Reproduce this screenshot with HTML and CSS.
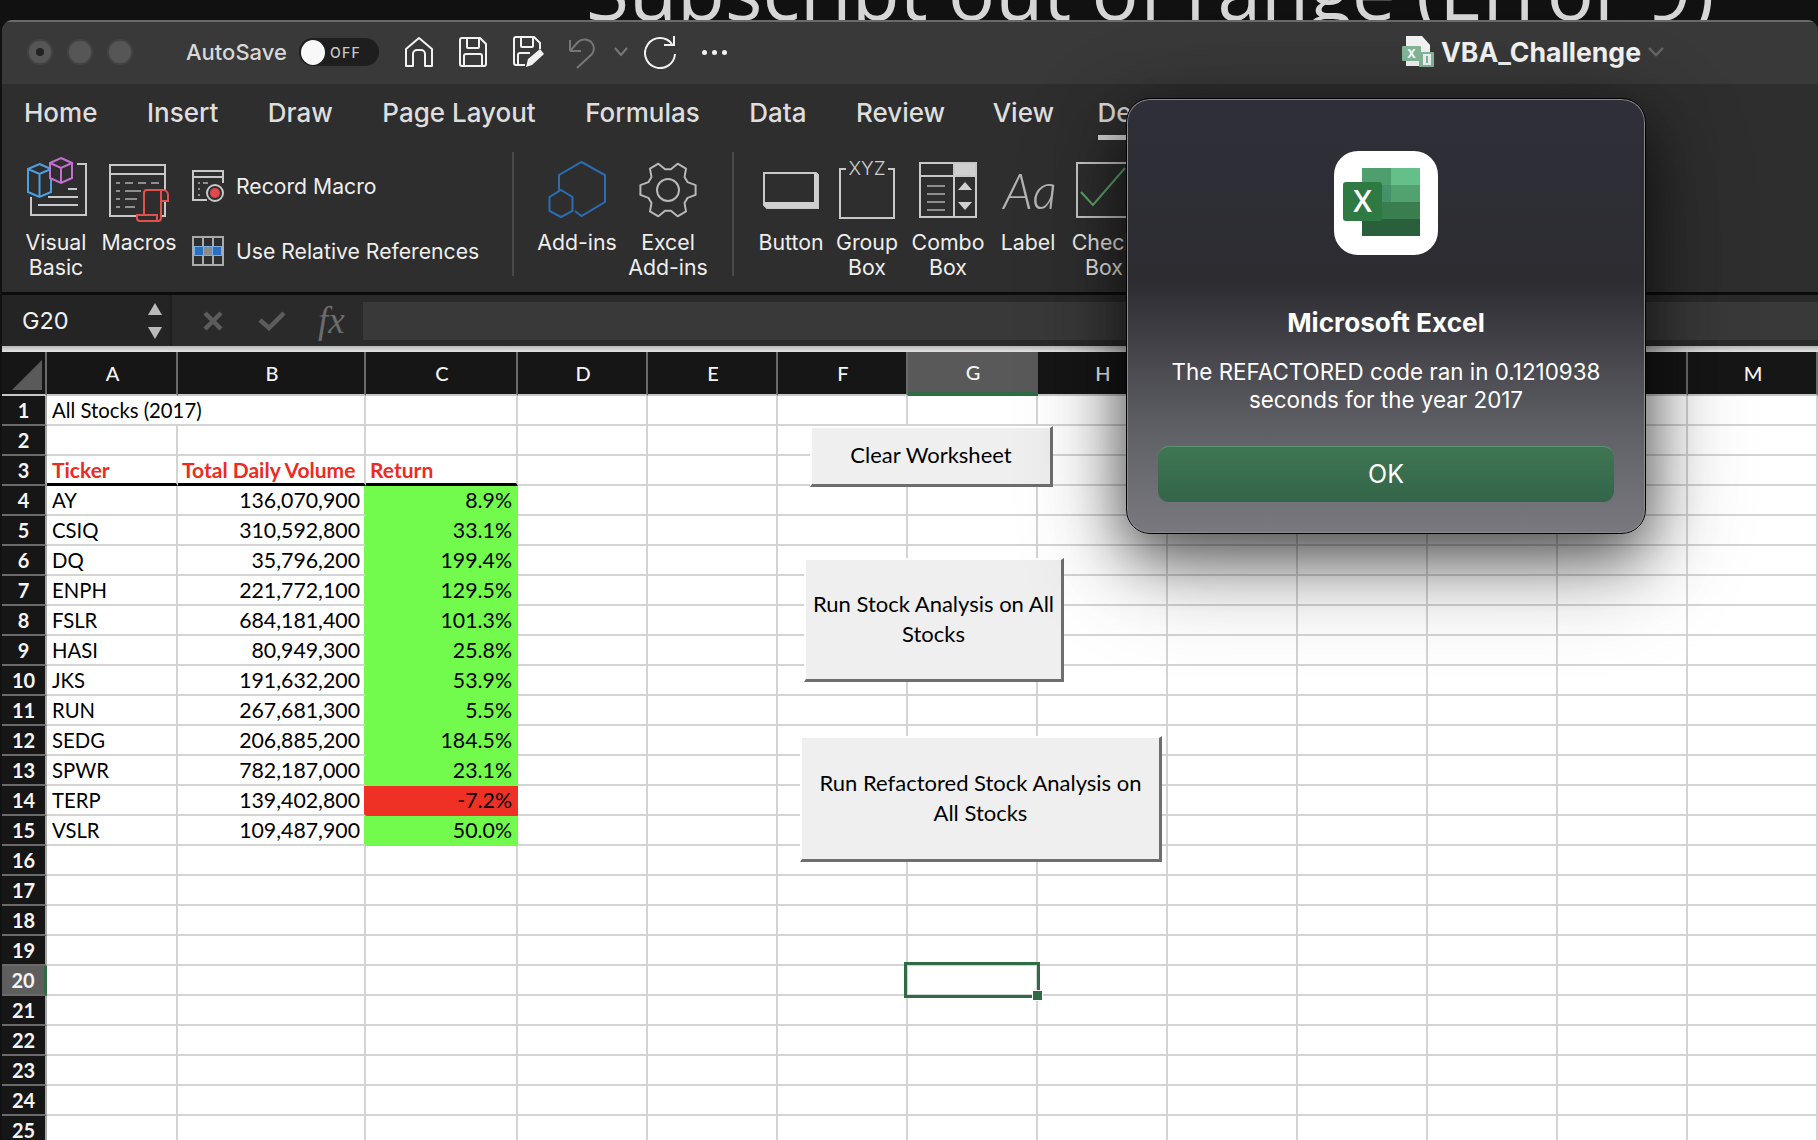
FILE: index.html
```html
<!DOCTYPE html>
<html lang="en">
<head>
  <meta charset="UTF-8">
  <title>VBA_Challenge</title>
  <link rel="stylesheet" href="styles.css">
</head>
<body>

  <div class="backdrop"><span class="backdrop-text">Subscript out of range (Error 9)</span></div>

  <div class="window">

    <!-- title bar -->
    <div class="titlebar">
      <div class="lights">
        <span class="light light-dot"></span>
        <span class="light"></span>
        <span class="light"></span>
      </div>
      <span class="autosave">AutoSave</span>
      <span class="toggle"><i class="knob"></i><b>OFF</b></span>
      <svg class="qa qa-home" width="30" height="32" viewBox="0 0 30 32"><path d="M2 30V13L15 2l13 11v17h-7V18a4 4 0 0 0-4-4h-4a4 4 0 0 0-4 4v12z" fill="none" stroke="#f2f2f2" stroke-width="2" stroke-linejoin="round"/></svg>
      <svg class="qa qa-save" width="30" height="32" viewBox="0 0 30 32"><path d="M4 2h18l6 6v20a2 2 0 0 1-2 2H4a2 2 0 0 1-2-2V4a2 2 0 0 1 2-2zM9 2v9a1 1 0 0 0 1 1h10a1 1 0 0 0 1-1V2M6 30V20a2 2 0 0 1 2-2h14a2 2 0 0 1 2 2v10" fill="none" stroke="#f2f2f2" stroke-width="2"/></svg>
      <svg class="qa qa-edit" width="32" height="34" viewBox="0 0 32 34"><path d="M13 30H4a2 2 0 0 1-2-2V4a2 2 0 0 1 2-2h18l6 6v6M9 2v9a1 1 0 0 0 1 1h10a1 1 0 0 0 1-1V2M6 30V20a2 2 0 0 1 2-2h10" fill="none" stroke="#f2f2f2" stroke-width="2"/><path d="M14 32l2-8 12-10 4 5-12 11z" fill="#f2f2f2"/></svg>
      <svg class="qa qa-undo" width="30" height="34" viewBox="0 0 30 34"><path d="M3 16V5M3 16h11M3 16l8-9c4-4 11-3 14 1 3 4 2 8 0 11L10 33" fill="none" stroke="#777" stroke-width="2"/></svg>
      <svg class="qa qa-caret" width="14" height="10" viewBox="0 0 14 10"><path d="M1 1l6 7 6-7" fill="none" stroke="#777" stroke-width="2"/></svg>
      <svg class="qa qa-redo" width="34" height="34" viewBox="0 0 34 34"><path d="M28 9a15 15 0 1 0 3 10M30 1v9H20" fill="none" stroke="#f2f2f2" stroke-width="2"/></svg>
      <span class="more"><i></i><i></i><i></i></span>

      <div class="doc-title">
        <svg width="32" height="32" viewBox="0 0 32 32">
          <path d="M4 0h16l8 9v21H4z" fill="#f4f4f4"/>
          <rect x="0" y="10" width="19" height="15" rx="1" fill="#86b89a"/>
          <text x="9.5" y="22" class="mini-x">X</text>
          <rect x="17" y="16" width="15" height="15" rx="1" fill="#86b89a"/>
          <rect x="21" y="18" width="8" height="11" fill="#f4f4f4"/>
          <rect x="24" y="20" width="2" height="7" fill="#86b89a"/>
        </svg>
        <span>VBA_Challenge</span>
        <svg width="16" height="10" viewBox="0 0 16 10"><path d="M1 1l7 7 7-7" fill="none" stroke="#666" stroke-width="2.4"/></svg>
      </div>
    </div>

    <!-- ribbon tabs -->
    <div class="tabs">
      <span class="tab">Home</span>
      <span class="tab">Insert</span>
      <span class="tab">Draw</span>
      <span class="tab">Page Layout</span>
      <span class="tab">Formulas</span>
      <span class="tab">Data</span>
      <span class="tab">Review</span>
      <span class="tab tab-view">View</span>
      <span class="tab tab-active">Developer</span>
    </div>

    <!-- ribbon tools -->
    <div class="ribbon">
      <div class="tool">
        <svg width="62" height="66" viewBox="0 0 62 66">
          <path d="M52 8h9v51H6V41" class="ln"/>
          <path d="M43 33h9M23 41h30M13 49h40" class="ln"/>
          <path d="M14.500 8L26 13v23l-11.500 5L3 36V13zM3 13l11.500 5L26 13M14.500 18v23" fill="#2e2e2e" stroke="#4d9fe0" stroke-width="2"/>
          <path d="M36 2l11 5v15l-11 5-11-5V7zM25 7l11 5 11-5M36 12v15" fill="#2e2e2e" stroke="#c56fd0" stroke-width="2"/>
        </svg>
        <span class="tool-label">Visual<br>Basic</span>
      </div>
      <div class="tool">
        <svg width="64" height="66" viewBox="0 0 64 66">
          <path d="M3 9h55v51H3zM3 18h55" class="ln"/>
          <path d="M9 27h4M18 27h8M31 27h8M44 27h8M9 35h4M18 35h16M9 43h4M18 43h12M9 51h4M18 51h10" class="ln thin"/>
          <path d="M37 60V37a3 3 0 0 1 3-3h16a5 5 0 0 1 5 5v6h-7M54 34v28a3 3 0 0 1-3 3H33a3 3 0 0 1-3-3v-3h20v6" fill="#2e2e2e" stroke="#e0524d" stroke-width="2"/>
        </svg>
        <span class="tool-label">Macros</span>
      </div>

      <div class="stack">
        <div class="stack-row">
          <svg width="32" height="32" viewBox="0 0 32 32">
            <path d="M15 30H1V1h30v12M1 7h30" class="ln"/>
            <path d="M6 13h2M11 13h5M6 19h2M6 25h2" class="ln thin"/>
            <circle cx="23" cy="23" r="8" fill="#2e2e2e" stroke="#c8c8c8" stroke-width="2"/>
            <circle cx="23" cy="23" r="5" fill="#e0484a"/>
          </svg>
          <span>Record Macro</span>
        </div>
        <div class="stack-row">
          <svg width="32" height="30" viewBox="0 0 32 30">
            <rect x="1" y="10" width="30" height="10" fill="#7ab0e8"/>
            <rect x="3" y="11" width="8" height="8" fill="#2a6fc0"/>
            <rect x="12" y="11" width="8" height="8" fill="#8a8a8a"/>
            <rect x="21" y="11" width="8" height="8" fill="#2a6fc0"/>
            <path d="M1 1h30v28H1zM11 1v9M21 1v9M11 20v9M21 20v9" fill="none" stroke="#aaa" stroke-width="2"/>
          </svg>
          <span>Use Relative References</span>
        </div>
      </div>

      <div class="rule"></div>

      <div class="tool">
        <svg width="60" height="66" viewBox="0 0 60 66">
          <path d="M12 35V19L34.500 6 58 19v27L34.500 60 28 55" fill="none" stroke="#2a6db5" stroke-width="2"/>
          <path d="M14 34l11.500 7v14L14 61 2.500 55V41z" fill="none" stroke="#2a6db5" stroke-width="2"/>
        </svg>
        <span class="tool-label">Add-ins</span>
      </div>
      <div class="tool">
        <svg width="60" height="66" viewBox="0 0 60 66">
          <g transform="translate(30 34)">
            <polygon class="gear" points="27.600,4.900 19.500,7.900 16.500,12.900 18,21.400 9.600,26.300 2.900,20.800 -2.900,20.800 -9.600,26.300 -18,21.400 -16.500,12.900 -19.500,7.900 -27.600,4.900 -27.600,-4.900 -19.500,-7.900 -16.500,-12.900 -18,-21.400 -9.600,-26.300 -2.900,-20.800 2.900,-20.800 9.600,-26.300 18,-21.400 16.500,-12.900 19.500,-7.900 27.600,-4.900"/>
            <circle class="gear" r="11"/>
          </g>
        </svg>
        <span class="tool-label">Excel<br>Add-ins</span>
      </div>

      <div class="rule"></div>

      <div class="tool">
        <svg width="58" height="66" viewBox="0 0 58 66">
          <path d="M2 17h52l2 2v33H5l-3-3z" class="ln"/>
          <path d="M2 46h50V17h2l2 2v33H5l-3-3z" fill="#d0d0d0"/>
        </svg>
        <span class="tool-label">Button</span>
      </div>
      <div class="tool">
        <svg width="58" height="66" viewBox="0 0 58 66">
          <path d="M8 13H2v49h54V13h-6" class="ln"/>
          <text x="29" y="19" class="xyz">XYZ</text>
        </svg>
        <span class="tool-label">Group<br>Box</span>
      </div>
      <div class="tool">
        <svg width="58" height="66" viewBox="0 0 58 66">
          <rect x="35" y="6" width="22" height="14" fill="#d0d0d0"/>
          <path d="M1 7h56v54H1zM1 20h56M35 7v54" class="ln"/>
          <path d="M8 30h18M8 38h18M8 46h18M8 54h18" class="ln thin"/>
          <path d="M46 26l7 8H39zM46 54l-7-8h14z" fill="#d0d0d0"/>
        </svg>
        <span class="tool-label">Combo<br>Box</span>
      </div>
      <div class="tool">
        <span class="aa">Aa</span>
        <span class="tool-label">Label</span>
      </div>
      <div class="tool">
        <svg width="58" height="66" viewBox="0 0 58 66">
          <path d="M2 7h54v54H2z" class="ln"/>
          <path d="M6 36l12 13L50 12" fill="none" stroke="#5fa86a" stroke-width="2"/>
        </svg>
        <span class="tool-label">Check<br>Box</span>
      </div>
    </div>

    <!-- name box and formula bar -->
    <div class="formula-bar">
      <div class="name-box">
        <span>G20</span>
        <span class="spin"><i class="spin-up"></i><i class="spin-down"></i></span>
      </div>
      <svg class="fb-x" width="20" height="20" viewBox="0 0 20 20"><path d="M2 2l16 16M18 2L2 18" stroke="#5c5c5c" stroke-width="4.500" fill="none"/></svg>
      <svg class="fb-check" width="28" height="20" viewBox="0 0 28 20"><path d="M2 9l9 8L26 2" stroke="#5c5c5c" stroke-width="4.500" fill="none"/></svg>
      <span class="fx">fx</span>
      <div class="formula-input"></div>
    </div>
    <div class="bar-edge"></div>

    <!-- worksheet -->
    <div class="sheet">
      <table class="grid">
        <colgroup>
          <col class="col-head"><col class="col-a"><col class="col-b"><col class="col-c">
          <col class="col-std"><col class="col-std"><col class="col-std"><col class="col-std"><col class="col-std"><col class="col-std"><col class="col-std"><col class="col-std"><col class="col-std"><col class="col-std">
        </colgroup>
        <thead>
          <tr>
            <th class="corner"><i></i></th><th>A</th><th>B</th><th>C</th><th>D</th><th>E</th><th>F</th><th class="on">G</th><th>H</th><th>I</th><th>J</th><th>K</th><th>L</th><th>M</th>
          </tr>
        </thead>
        <tbody>
          <tr><th>1</th><td colspan="2">All Stocks (2017)</td><td></td><td></td><td></td><td></td><td></td><td></td><td></td><td></td><td></td><td></td><td></td></tr>
          <tr><th>2</th><td></td><td></td><td></td><td></td><td></td><td></td><td></td><td></td><td></td><td></td><td></td><td></td><td></td></tr>
          <tr class="heads"><th>3</th><td class="hd">Ticker</td><td class="hd">Total Daily Volume</td><td class="hd">Return</td><td></td><td></td><td></td><td></td><td></td><td></td><td></td><td></td><td></td><td></td></tr>
          <tr class="pos"><th>4</th><td>AY</td><td class="num">136,070,900</td><td class="num ret">8.9%</td><td></td><td></td><td></td><td></td><td></td><td></td><td></td><td></td><td></td><td></td></tr>
          <tr class="pos"><th>5</th><td>CSIQ</td><td class="num">310,592,800</td><td class="num ret">33.1%</td><td></td><td></td><td></td><td></td><td></td><td></td><td></td><td></td><td></td><td></td></tr>
          <tr class="pos"><th>6</th><td>DQ</td><td class="num">35,796,200</td><td class="num ret">199.4%</td><td></td><td></td><td></td><td></td><td></td><td></td><td></td><td></td><td></td><td></td></tr>
          <tr class="pos"><th>7</th><td>ENPH</td><td class="num">221,772,100</td><td class="num ret">129.5%</td><td></td><td></td><td></td><td></td><td></td><td></td><td></td><td></td><td></td><td></td></tr>
          <tr class="pos"><th>8</th><td>FSLR</td><td class="num">684,181,400</td><td class="num ret">101.3%</td><td></td><td></td><td></td><td></td><td></td><td></td><td></td><td></td><td></td><td></td></tr>
          <tr class="pos"><th>9</th><td>HASI</td><td class="num">80,949,300</td><td class="num ret">25.8%</td><td></td><td></td><td></td><td></td><td></td><td></td><td></td><td></td><td></td><td></td></tr>
          <tr class="pos"><th>10</th><td>JKS</td><td class="num">191,632,200</td><td class="num ret">53.9%</td><td></td><td></td><td></td><td></td><td></td><td></td><td></td><td></td><td></td><td></td></tr>
          <tr class="pos"><th>11</th><td>RUN</td><td class="num">267,681,300</td><td class="num ret">5.5%</td><td></td><td></td><td></td><td></td><td></td><td></td><td></td><td></td><td></td><td></td></tr>
          <tr class="pos"><th>12</th><td>SEDG</td><td class="num">206,885,200</td><td class="num ret">184.5%</td><td></td><td></td><td></td><td></td><td></td><td></td><td></td><td></td><td></td><td></td></tr>
          <tr class="pos"><th>13</th><td>SPWR</td><td class="num">782,187,000</td><td class="num ret">23.1%</td><td></td><td></td><td></td><td></td><td></td><td></td><td></td><td></td><td></td><td></td></tr>
          <tr class="neg"><th>14</th><td>TERP</td><td class="num">139,402,800</td><td class="num ret">-7.2%</td><td></td><td></td><td></td><td></td><td></td><td></td><td></td><td></td><td></td><td></td></tr>
          <tr class="pos"><th>15</th><td>VSLR</td><td class="num">109,487,900</td><td class="num ret">50.0%</td><td></td><td></td><td></td><td></td><td></td><td></td><td></td><td></td><td></td><td></td></tr>
          <tr><th>16</th><td></td><td></td><td></td><td></td><td></td><td></td><td></td><td></td><td></td><td></td><td></td><td></td><td></td></tr>
          <tr><th>17</th><td></td><td></td><td></td><td></td><td></td><td></td><td></td><td></td><td></td><td></td><td></td><td></td><td></td></tr>
          <tr><th>18</th><td></td><td></td><td></td><td></td><td></td><td></td><td></td><td></td><td></td><td></td><td></td><td></td><td></td></tr>
          <tr><th>19</th><td></td><td></td><td></td><td></td><td></td><td></td><td></td><td></td><td></td><td></td><td></td><td></td><td></td></tr>
          <tr><th class="on-row">20</th><td></td><td></td><td></td><td></td><td></td><td></td><td></td><td></td><td></td><td></td><td></td><td></td><td></td></tr>
          <tr><th>21</th><td></td><td></td><td></td><td></td><td></td><td></td><td></td><td></td><td></td><td></td><td></td><td></td><td></td></tr>
          <tr><th>22</th><td></td><td></td><td></td><td></td><td></td><td></td><td></td><td></td><td></td><td></td><td></td><td></td><td></td></tr>
          <tr><th>23</th><td></td><td></td><td></td><td></td><td></td><td></td><td></td><td></td><td></td><td></td><td></td><td></td><td></td></tr>
          <tr><th>24</th><td></td><td></td><td></td><td></td><td></td><td></td><td></td><td></td><td></td><td></td><td></td><td></td><td></td></tr>
          <tr><th>25</th><td></td><td></td><td></td><td></td><td></td><td></td><td></td><td></td><td></td><td></td><td></td><td></td><td></td></tr>
        </tbody>
      </table>

      <div class="sheet-btn btn-clear">Clear Worksheet</div>
      <div class="sheet-btn btn-run">Run Stock Analysis on All Stocks</div>
      <div class="sheet-btn btn-refactored">Run Refactored Stock Analysis on All Stocks</div>
      <div class="selection"><i></i></div>
    </div>
  </div>

  <!-- message box -->
  <div class="dialog">
    <svg class="app-icon" width="104" height="104" viewBox="0 0 104 104">
      <rect width="104" height="104" rx="24" fill="#fff"/>
      <rect x="28" y="17" width="29" height="17" fill="#4f9e6d"/>
      <rect x="57" y="17" width="29" height="17" fill="#64c088"/>
      <rect x="28" y="34" width="29" height="17" fill="#45916a"/>
      <rect x="57" y="34" width="29" height="17" fill="#52a26f"/>
      <rect x="28" y="51" width="58" height="17" fill="#3a7d4f"/>
      <rect x="28" y="68" width="58" height="17" fill="#2a5f3c"/>
      <rect x="9" y="31" width="39" height="39" rx="3" fill="#2f7a43"/>
      <text x="28.500" y="61" class="app-x">X</text>
    </svg>
    <div class="dialog-title">Microsoft Excel</div>
    <p class="dialog-text">The REFACTORED code ran in 0.1210938<br>seconds for the year 2017</p>
    <div class="dialog-ok">OK</div>
  </div>

</body>
</html>
```

FILE: styles.css
```css
html, body {
  margin: 0;
  height: 100%;
  overflow: hidden;
}
body {
  background: #111;
  font-family: Inter, "Liberation Sans", sans-serif;
  color: #e8e8e8;
}

/* strip of another window behind Excel */
.backdrop {
  height: 20px;
  overflow: hidden;
  padding-left: 586px;
  white-space: nowrap;
}
.backdrop-text {
  display: block;
  margin-top: -65px;
  font-family: "Open Sans", sans-serif;
  font-size: 78.400px;
  line-height: 110px;
  color: #d6d6d6;
}

.window {
  margin-left: 2px;
  border-radius: 11px 11px 0 0;
  overflow: hidden;
  background: #2e2e2e;
}

/* title bar */
.titlebar {
  height: 64px;
  box-sizing: border-box;
  border-top: 2px solid #6a6a6a;
  background: #393939;
  display: flex;
  align-items: center;
  padding: 0 154px 2px 25px;
}
.lights {
  display: flex;
  gap: 14px;
}
.light {
  width: 26px;
  height: 26px;
  box-sizing: border-box;
  border-radius: 50%;
  background: #565656;
  border: 2px solid #444;
  display: flex;
  align-items: center;
  justify-content: center;
}
.light-dot::after {
  content: "";
  width: 8px;
  height: 8px;
  border-radius: 50%;
  background: #222;
}
.autosave {
  margin-left: 53px;
  font-size: 22px;
  font-weight: 500;
  color: #d8d8d8;
}
.toggle {
  margin-left: 12px;
  width: 80px;
  height: 28px;
  box-sizing: border-box;
  border-radius: 14px;
  background: #1e1e1e;
  display: flex;
  align-items: center;
  padding-left: 2px;
}
.knob {
  width: 24px;
  height: 25px;
  border-radius: 50%;
  background: #f8f8f8;
}
.toggle b {
  margin-left: 5px;
  font-size: 14px;
  font-weight: 500;
  letter-spacing: 1.300px;
  color: #c8c8c8;
}
.qa {
  flex: none;
}
.qa-home { margin-left: 25px; }
.qa-save { margin-left: 24px; }
.qa-edit { margin-left: 24px; }
.qa-undo { margin-left: 23px; }
.qa-caret { margin-left: 17px; }
.qa-redo { margin-left: 16px; }
.more {
  margin-left: 24px;
  display: flex;
  gap: 5px;
}
.more i {
  width: 5px;
  height: 5px;
  border-radius: 50%;
  background: #f2f2f2;
}
.doc-title {
  margin-left: auto;
  display: flex;
  align-items: center;
  gap: 7px;
  font-size: 26.600px;
  font-weight: 700;
  color: #f4f4f4;
}
.mini-x {
  font-size: 12px;
  font-weight: 700;
  fill: #fff;
  text-anchor: middle;
}

/* tabs */
.tabs {
  height: 66px;
  box-sizing: border-box;
  padding: 14px 0 0 22px;
  display: flex;
  gap: 49.500px;
  white-space: nowrap;
}
.tab {
  height: 42px;
  font-size: 26px;
  font-weight: 500;
  line-height: 30px;
  color: #dedede;
}
.tab-view {
  margin-left: -2px;
}
.tab-active {
  margin-left: -6px;
  border-bottom: 5px solid #d8d8d8;
  height: 37px;
  box-sizing: content-box;
}

/* ribbon */
.ribbon {
  height: 142px;
  box-sizing: border-box;
  padding: 6px 0 0 14px;
  display: grid;
  grid-template-columns: 80px 86px 321px 20px 108px 74px 56px 60px 92px 70px 90px 62px;
}
.tool {
  display: flex;
  flex-direction: column;
  align-items: center;
}
.tool svg {
  flex: none;
  display: block;
}
.tool-label {
  margin-top: 8px;
  font-size: 21.300px;
  line-height: 25px;
  text-align: center;
  white-space: nowrap;
  color: #eee;
}
.ln {
  fill: none;
  stroke: #c8c8c8;
  stroke-width: 2;
}
.ln.thin {
  stroke: #8e8e8e;
}
.gear {
  fill: none;
  stroke: #b8b8b8;
  stroke-width: 2;
  stroke-linejoin: round;
}
.xyz {
  font-family: Inter, sans-serif;
  font-size: 19px;
  font-weight: 300;
  fill: #d0d0d0;
  text-anchor: middle;
}
.aa {
  height: 66px;
  margin-left: 4px;
  font-family: Lato, sans-serif;
  font-size: 49px;
  font-style: italic;
  font-weight: 300;
  line-height: 68px;
  color: #b4b4b4;
}
.stack {
  padding: 14px 0 0 10px;
  display: flex;
  flex-direction: column;
  gap: 34px;
}
.stack-row {
  display: flex;
  align-items: center;
  gap: 12px;
  font-size: 21.200px;
  color: #eee;
  white-space: nowrap;
}
.rule {
  width: 2px;
  height: 124px;
  margin: -4px auto 0;
  background: #4a4a4a;
}

/* formula bar */
.formula-bar {
  height: 54px;
  box-sizing: border-box;
  border-top: 3px solid #0c0c0c;
  background: #2a2a2a;
  display: flex;
  align-items: center;
}
.name-box {
  width: 170px;
  height: 100%;
  box-sizing: border-box;
  padding: 0 8px 0 20px;
  background: #242424;
  border-right: 2px solid #1e1e1e;
  display: flex;
  align-items: center;
  justify-content: space-between;
  font-size: 23.500px;
  color: #f0f0f0;
}
.spin {
  display: flex;
  flex-direction: column;
  gap: 12px;
}
.spin i {
  width: 0;
  height: 0;
  border-left: 7px solid transparent;
  border-right: 7px solid transparent;
}
.spin-up { border-bottom: 12px solid #bbb; }
.spin-down { border-top: 12px solid #bbb; }
.fb-x { margin-left: 31px; }
.fb-check { margin-left: 35px; }
.fx {
  margin-left: 32px;
  width: 34px;
  font-family: "Liberation Serif", serif;
  font-style: italic;
  font-size: 37px;
  line-height: 44px;
  color: #6c6c6c;
}
.formula-input {
  flex: 1;
  margin-left: 11px;
  height: 38px;
  background: #393939;
}
.bar-edge {
  height: 6px;
  background: linear-gradient(#b8b8b8, #e4e4e4);
}

/* worksheet */
.sheet {
  position: relative;
  background: #fff;
}
.grid {
  table-layout: fixed;
  width: 1816px;
  border-collapse: separate;
  border-spacing: 0;
  font-family: Lato, sans-serif;
  font-size: 20.300px;
  color: #000;
}
.col-head { width: 45px; }
.col-a { width: 131px; }
.col-b { width: 188px; }
.col-c { width: 152px; }
.col-std { width: 130px; }
.grid td {
  height: 30px;
  box-sizing: border-box;
  padding: 0 4px 0 5px;
  border-right: 2px solid #d4d4d4;
  border-bottom: 2px solid #d4d4d4;
  white-space: nowrap;
  overflow: hidden;
}
.grid th {
  box-sizing: border-box;
  padding: 0;
  background: #161616;
  color: #f4f4f4;
  font-weight: 500;
  font-size: 20px;
}
.grid thead th {
  height: 44px;
  padding-left: 2px;
  border-right: 2px solid #6a6a6a;
  border-bottom: 2px solid #c8c8c8;
}
.grid thead th.on {
  background: #595959;
  border-right-color: #595959;
  border-bottom: 4px solid #2f6b45;
}
.corner {
  position: relative;
}
.corner i {
  position: absolute;
  left: 10px;
  top: 8px;
  border-left: 30px solid transparent;
  border-bottom: 30px solid #5a5a5a;
}
.grid tbody th {
  height: 30px;
  border-right: 2px solid #a8a8a8;
  border-bottom: 2px solid #6a6a6a;
  font-weight: 700;
}
.grid tbody th.on-row {
  background: #5e5e5e;
  border-right: 3px solid #2f6b45;
}
.grid td.hd {
  color: #ee2a24;
  font-weight: 700;
  font-size: 21px;
}
.grid td.hd + td.hd {
  padding-left: 4px;
}
.heads td:nth-child(-n+4) {
  border-bottom: 3px solid #000;
}
.grid td.num {
  text-align: right;
  padding-right: 4px;
  font-size: 21.300px;
}
.pos td.ret { background: #72fb4c; border-color: #72fb4c; }
.neg td.ret { background: #ee3124; border-color: #ee3124; }
.pos td:nth-child(3) { border-right-color: #72fb4c; }
.neg td:nth-child(3) { border-right-color: #ee3124; }

/* buttons and selection float over the grid */
.sheet-btn {
  position: absolute;
  box-sizing: border-box;
  display: flex;
  align-items: center;
  justify-content: center;
  text-align: center;
  padding: 0 6px 2px;
  background: #efefef;
  border-style: solid;
  border-width: 2px 3px 3px 2px;
  border-color: #fff #6e6e6e #6e6e6e #fff;
  font-family: Lato, sans-serif;
  font-size: 22px;
  line-height: 30px;
  color: #000;
}
.btn-clear { left: 808px; top: 74px; width: 243px; height: 61px; }
.btn-run { left: 802px; top: 206px; width: 260px; height: 124px; }
.btn-refactored { left: 798px; top: 384px; width: 362px; height: 126px; }
.selection {
  position: absolute;
  left: 902px;
  top: 610px;
  width: 136px;
  height: 36px;
  box-sizing: border-box;
  border: 3px solid #2f6b45;
}
.selection i {
  position: absolute;
  right: -6px;
  bottom: -6px;
  width: 9px;
  height: 9px;
  background: #2f6b45;
  border: 1px solid #fff;
}

/* message box */
.dialog {
  position: absolute;
  left: 1126px;
  top: 98px;
  width: 520px;
  height: 436px;
  box-sizing: border-box;
  border: 1px solid #000;
  border-radius: 24px;
  box-shadow: inset 0 0 0 1px #8a8a8e, 0 20px 60px rgba(0, 0, 0, 0.6), 0 30px 110px rgba(0, 0, 0, 0.3);
  background: linear-gradient(#2f2f39 0%, #2c2c31 42%, #5f5f66 76%, #79797f 100%);
  padding-top: 52px;
  display: flex;
  flex-direction: column;
  align-items: center;
  color: #fff;
}
.app-icon {
  flex: none;
}
.app-x {
  font-family: "Open Sans", sans-serif;
  font-size: 30px;
  font-weight: 600;
  fill: #fff;
  text-anchor: middle;
}
.dialog-title {
  margin-top: 52px;
  font-size: 26.200px;
  font-weight: 700;
  line-height: 32px;
}
.dialog-text {
  margin: 19px 0 0;
  font-size: 22.400px;
  line-height: 28px;
  text-align: center;
}
.dialog-ok {
  margin-top: 32px;
  width: 456px;
  height: 56px;
  border-radius: 11px;
  background: linear-gradient(#3f7652, #33654a);
  border-top: 1px solid #5c9271;
  box-sizing: border-box;
  font-size: 25px;
  line-height: 54px;
  text-align: center;
}
```
